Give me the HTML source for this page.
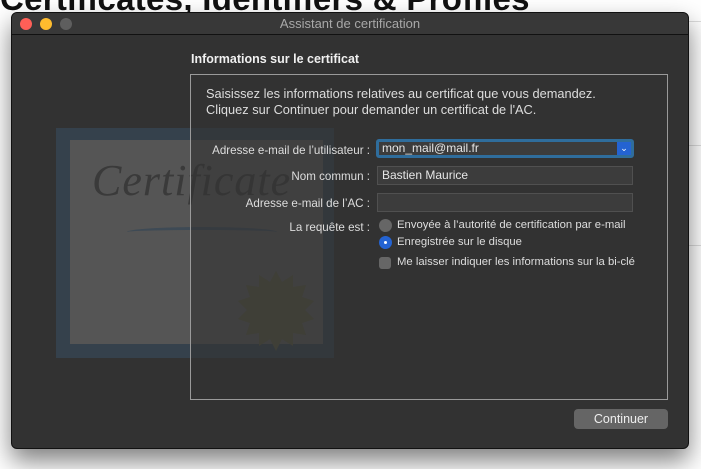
<!DOCTYPE html>
<html><head><meta charset="utf-8"><style>
*{margin:0;padding:0;box-sizing:border-box}
body{width:701px;height:469px;overflow:hidden;background:#fff;position:relative;font-family:"Liberation Sans",sans-serif}
.h{position:absolute;left:0;top:-20px;font-size:33px;font-weight:bold;color:#111;white-space:nowrap;letter-spacing:0.3px}
.ln{position:absolute;left:689px;width:12px;height:1px;background:#ddd}
.win{position:absolute;left:11px;top:12px;width:678px;height:437px;background:#323232;border:1px solid #111;border-radius:6px;box-shadow:0 12px 25px rgba(0,0,0,.5);overflow:hidden}
.tb{position:absolute;left:0;top:0;right:0;height:22px;background:#383838;border-bottom:1px solid #111;color:#a8a8a8;font-size:13px;text-align:center;line-height:22px}
.dot{position:absolute;top:5px;width:12px;height:12px;border-radius:50%}
.t{position:absolute;color:#ddd;font-size:11.3px;white-space:nowrap}
.lab{position:absolute;right:318px;color:#ddd;font-size:11.6px;white-space:nowrap}
.f{position:absolute;left:365px;width:256px;height:19px;background:#3c3c3c;border:1px solid #505050;color:#e6e6e6;font-size:12px;padding-left:4px;line-height:17px}
</style></head><body>
<div class="h">Certificates, Identifiers &amp; Profiles</div>
<div class="ln" style="top:21px"></div><div class="ln" style="top:145px"></div><div class="ln" style="top:245px"></div>
<div class="win">
<div class="tb">Assistant de certification</div>
<div class="dot" style="left:8px;background:#fe5f57"></div>
<div class="dot" style="left:28px;background:#febc2e"></div>
<div class="dot" style="left:48px;background:#5e5e5e"></div>
<div style="position:absolute;left:44px;top:115px;width:278px;height:230px;background:#35414c"></div>
<div style="position:absolute;left:58px;top:127px;width:253px;height:204px;background:#555"></div>
<div style="position:absolute;left:80px;top:142px;font-family:'Liberation Serif',serif;font-style:italic;font-size:44px;color:#3a3a3a;letter-spacing:1px">Certificate</div>
<div style="position:absolute;left:115px;top:214px;width:150px;height:10px;border-radius:50%;border-top:3px solid #3e4a55"></div>
<svg style="position:absolute;left:222px;top:256px" width="84" height="84" viewBox="-42 -42 84 84"><polygon fill="#53533f" points="0,-40 6,-29 17,-36 17,-24 30,-26 26,-14 38,-10 29,-1 38,8 26,12 30,24 17,22 17,35 6,28 0,40 -6,28 -17,35 -17,22 -30,24 -26,12 -38,8 -29,-1 -38,-10 -26,-14 -30,-26 -17,-24 -17,-36 -6,-29"/></svg>
<div style="position:absolute;left:178px;top:61px;width:478px;height:326px;background:rgba(50,50,50,.6);border:1px solid #9a9a9a"></div>
<div class="t" style="left:179px;top:39px;font-size:12.5px;font-weight:bold;color:#f0f0f0">Informations sur le certificat</div>
<div class="t" style="left:194px;top:73px;font-size:12.8px;line-height:16px">Saisissez les informations relatives au certificat que vous demandez.<br>Cliquez sur Continuer pour demander un certificat de l'AC.</div>
<div class="lab" style="top:131px">Adresse e-mail de l’utilisateur :</div>
<div class="lab" style="top:157px">Nom commun :</div>
<div class="lab" style="top:184px">Adresse e-mail de l’AC :</div>
<div class="lab" style="top:208px">La requête est :</div>
<div class="f" style="top:126px;height:19px;border:3px solid #2f6d9c;border-radius:3px;line-height:13px;padding-left:3px;left:364px;width:258px">mon_mail@mail.fr<span style="position:absolute;right:0;top:0;width:14px;height:13px;background:#2463d2;color:#fff;font-size:9px;text-align:center;line-height:12px">&#x2304;</span></div>
<div class="f" style="top:153px">Bastien Maurice</div>
<div class="f" style="top:180px"></div>
<div style="position:absolute;left:367px;top:206px;width:13px;height:13px;border-radius:50%;background:#666"></div>
<div style="position:absolute;left:367px;top:223px;width:13px;height:13px;border-radius:50%;background:#2463d2"><div style="position:absolute;left:5px;top:5px;width:3px;height:3px;border-radius:50%;background:#fff"></div></div>
<div style="position:absolute;left:367px;top:244px;width:12px;height:12px;border-radius:3px;background:#666"></div>
<div class="t" style="left:385px;top:206px">Envoyée à l’autorité de certification par e-mail</div>
<div class="t" style="left:385px;top:223px">Enregistrée sur le disque</div>
<div class="t" style="left:385px;top:243px">Me laisser indiquer les informations sur la bi-clé</div>
<div style="position:absolute;left:562px;top:396px;width:94px;height:20px;background:#656565;border-radius:4px;color:#eee;font-size:12.5px;text-align:center;line-height:20px">Continuer</div>
</div>
</body></html>
